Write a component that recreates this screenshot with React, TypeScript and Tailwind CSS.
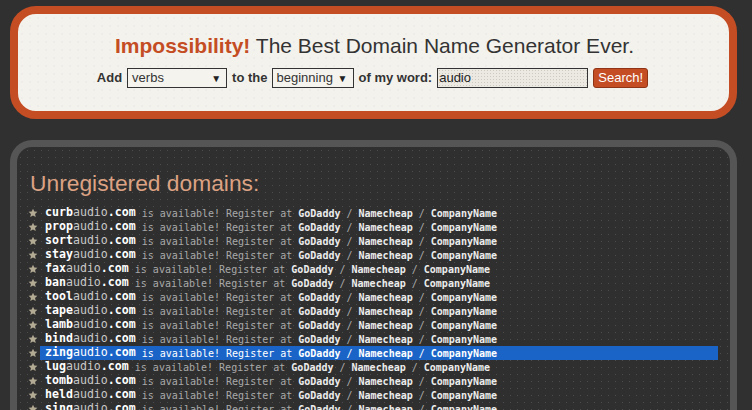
import React from 'react';

const prefixes = ['curb', 'prop', 'sort', 'stay', 'fax', 'ban', 'tool', 'tape', 'lamb', 'bind', 'zing', 'lug', 'tomb', 'held', 'sing'];

function Star() {
  return (
    <svg viewBox="0 0 24 24" className="w-[10px] h-[10px]" aria-hidden>
      <path d="M12 1.5l3.1 6.9 7.4.7-5.6 5 1.7 7.4L12 17.7l-6.6 3.8 1.7-7.4-5.6-5 7.4-.7z" fill="#b3aa94" />
    </svg>
  );
}

function Row({ prefix, selected }: { prefix: string; selected: boolean }) {
  const dim = selected ? 'text-white' : 'text-[#a9a9a9]';
  const link = selected ? 'text-white' : 'text-[#ececec]';
  return (
    <div className="flex items-center h-[14px]">
      <div className="w-[23px] flex justify-end pr-[2px]">
        <Star />
      </div>
      <div className={`flex-1 flex items-center h-[14px] pl-[5px] whitespace-pre ${selected ? 'bg-[#1a64c8]' : ''}`}>
        <span className="text-[11.6px] font-bold text-white">{prefix}</span>
        <span className={`text-[11.6px] ${selected ? 'text-white' : 'text-[#c9c9c9]'}`}>audio</span>
        <span className="text-[11.6px] font-bold text-white">.com</span>
        <span className={`text-[10px] ${dim}`}> is available! Register at </span>
        <span className={`text-[10px] font-bold ${link}`}>GoDaddy</span>
        <span className={`text-[10px] ${dim}`}> / </span>
        <span className={`text-[10px] font-bold ${link}`}>Namecheap</span>
        <span className={`text-[10px] ${dim}`}> / </span>
        <span className={`text-[10px] font-bold ${link}`}>CompanyName</span>
      </div>
    </div>
  );
}

function Select({ value, width }: { value: string; width: string }) {
  return (
    <div className={`${width} h-[20px] border border-[#333] bg-[#f4f3ee] flex items-center justify-between pl-[4px] pr-[5px] text-[13px] font-normal text-[#333]`}>
      <span>{value}</span>
      <span className="text-[10px] text-[#222]">▼</span>
    </div>
  );
}

export default function App() {
  return (
    <div className="bg-[#303030] pt-[6px] pl-[10px] pr-[15px] font-['Liberation_Sans',Arial,sans-serif] overflow-hidden h-[410px]">
      <header className="h-[113px] border-[8px] border-[#c44d24] rounded-[26px] bg-[#f3f2ed] bg-[radial-gradient(#dfe1e3_0.5px,transparent_0.8px)] bg-[size:8px_8px] flex flex-col items-center pt-[19px]">
        <h1 className="text-[21px] leading-[26px] text-[#333] pl-[2px]">
          <span className="font-bold text-[#c44d24]">Impossibility!</span> The Best Domain Name Generator Ever.
        </h1>
        <div className="mt-[9px] flex items-center gap-[4px] text-[13px] font-bold text-[#333] pr-[2px]">
          <span className="mr-[1px]">Add</span>
          <Select value="verbs" width="w-[100px]" />
          <span className="ml-[1px]">to the</span>
          <Select value="beginning" width="w-[82px]" />
          <span className="ml-[1px]">of my word:</span>
          <div className="ml-[1px] w-[151px] h-[20px] border border-[#333] bg-[#ebe9e2] bg-[radial-gradient(#cdcac0_0.6px,transparent_0.8px)] bg-[size:3px_3px] flex items-center pl-[1px] text-[13px] font-normal text-[#222]">
            audio
          </div>
          <button className="ml-[1px] w-[55px] h-[20px] rounded-[3px] bg-[#c44d24] border border-[#8f3516] text-white text-[13px] font-normal flex items-center justify-center">
            Search!
          </button>
        </div>
      </header>

      <section className="mt-[21px] border-[7px] border-b-0 border-[#555] rounded-t-[22px] bg-[#2f2f2f] bg-[radial-gradient(#4c4c4c_0.7px,transparent_1px)] bg-[size:7px_7px] pr-[12px] pt-[23px] h-[300px]">
        <h2 className="pl-[13px] text-[22.8px] leading-[26px] text-[#dca283]">Unregistered domains:</h2>
        <div className="mt-[10px] font-['DejaVu_Sans_Mono',monospace]">
          {prefixes.map(p => (
            <Row key={p} prefix={p} selected={p === 'zing'} />
          ))}
        </div>
      </section>
    </div>
  );
}
